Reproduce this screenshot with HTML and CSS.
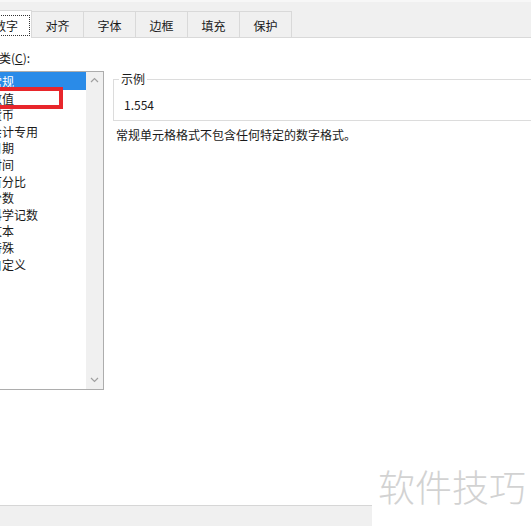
FILE: index.html
```html
<!DOCTYPE html>
<html lang="zh">
<head>
<meta charset="utf-8">
<link rel="stylesheet" href="styles.css">
</head>
<body>
<div class="page">
  <div class="tabbar">
    <div class="tab active"><span class="focus">数字</span></div>
    <div class="tab">对齐</div>
    <div class="tab">字体</div>
    <div class="tab">边框</div>
    <div class="tab">填充</div>
    <div class="tab">保护</div>
  </div>
  <div class="main">
    <div class="left">
      <div class="label">分类(<u>C</u>):</div>
      <div class="listbox">
        <ul class="items">
          <li class="sel">常规</li>
          <li>数值</li>
          <li>货币</li>
          <li>会计专用</li>
          <li>日期</li>
          <li>时间</li>
          <li>百分比</li>
          <li>分数</li>
          <li>科学记数</li>
          <li>文本</li>
          <li>特殊</li>
          <li>自定义</li>
        </ul>
        <div class="scrollbar">
          <svg class="arrow" width="9" height="6" viewBox="0 0 9 6"><path d="M1 5 L4.5 1.5 L8 5" fill="none" stroke="#a0a0a0" stroke-width="1.2"/></svg>
          <svg class="arrow" width="9" height="6" viewBox="0 0 9 6"><path d="M1 1 L4.5 4.5 L8 1" fill="none" stroke="#a0a0a0" stroke-width="1.2"/></svg>
        </div>
        <div class="redbox"></div>
      </div>
    </div>
    <div class="right">
      <div class="group">
        <span class="legend">示例</span>
        <div class="sample">1.554</div>
      </div>
      <div class="desc">常规单元格格式不包含任何特定的数字格式。</div>
    </div>
  </div>
  <div class="footer"></div>
  <div class="watermark">软件技巧</div>
</div>
</body>
</html>
```

FILE: styles.css
```css
html, body {
  margin: 0;
  padding: 0;
  background: #ffffff;
}
body {
  font-family: "Noto Sans CJK SC", "Microsoft YaHei", sans-serif;
  font-size: 12px;
  color: #1a1a1a;
  overflow: hidden;
}
.page {
  position: relative;
  width: 531px;
  height: 526px;
  display: flex;
  flex-direction: column;
  overflow: hidden;
}
.tabbar {
  height: 38px;
  flex: none;
  background: #f0f0f0;
  border-top: 2px solid #f7f7f7;
  box-sizing: border-box;
  border-bottom: 1px solid #d9d9d9;
  display: flex;
  align-items: flex-end;
  margin-left: -20px;
}
.tab {
  width: 52px;
  height: 26px;
  box-sizing: border-box;
  border: 1px solid #d9d9d9;
  border-bottom: none;
  border-left: none;
  display: flex;
  align-items: center;
  justify-content: center;
  padding-top: 2px;
  background: #f0f0f0;
}
.tab.active {
  background: #ffffff;
  height: 28px;
  margin-bottom: -1px;
  border-left: 1px solid #d9d9d9;
  padding-top: 1px;
}
.focus {
  outline: 1px dotted #333;
  outline-offset: 1px;
  padding: 0 10px;
}
.main {
  flex: 1;
  display: flex;
  align-items: flex-start;
}
.left {
  margin-left: -20px;
  width: 124px;
  flex: none;
}
.label {
  padding-left: 7px;
  margin-top: 12px;
  line-height: 16px;
}
.label u {
  text-decoration: underline;
}
.listbox {
  position: relative;
  margin-top: 5px;
  height: 319px;
  box-sizing: border-box;
  border: 1px solid #adadad;
  display: flex;
}
.items {
  list-style: none;
  margin: 0;
  padding: 0;
  flex: 1;
}
.items li {
  line-height: 16.6px;
  height: 16.6px;
  padding-left: 9px;
  padding-top: 1px;
  margin-bottom: -1px;
  white-space: nowrap;
}
.items li.sel {
  background: #2a8be8;
  color: #ffffff;
  height: 16px;
  padding-top: 1.6px;
  margin-bottom: 0;
}
.scrollbar {
  width: 17px;
  flex: none;
  background: #f0f0f0;
  display: flex;
  flex-direction: column;
  justify-content: space-between;
  align-items: center;
  padding: 5px 0 6px;
  box-sizing: border-box;
}
.redbox {
  position: absolute;
  left: -4px;
  top: 15px;
  width: 86px;
  height: 22px;
  box-sizing: border-box;
  border: 4px solid #e8262b;
}
.right {
  flex: 1;
  margin-left: 9px;
  margin-top: 41px;
  margin-right: -10px;
}
.group {
  position: relative;
  border: 1px solid #dcdcdc;
  height: 42px;
  box-sizing: border-box;
  padding: 17px 0 0 10px;
}
.legend {
  position: absolute;
  top: -9px;
  left: 5px;
  background: #ffffff;
  padding: 0 2px;
  line-height: 16px;
}
.sample {
  line-height: 16px;
}
.desc {
  margin-top: 6px;
  padding-left: 3px;
  line-height: 16px;
}
.footer {
  flex: none;
  width: 372px;
  height: 21px;
  box-sizing: border-box;
  background: #f0f0f0;
  border-top: 1px solid #d6d6d6;
}
.watermark {
  position: absolute;
  right: 5px;
  bottom: 19px;
  font-size: 37px;
  line-height: 42px;
  color: #d2d2d2;
  font-weight: 300;
}
```
